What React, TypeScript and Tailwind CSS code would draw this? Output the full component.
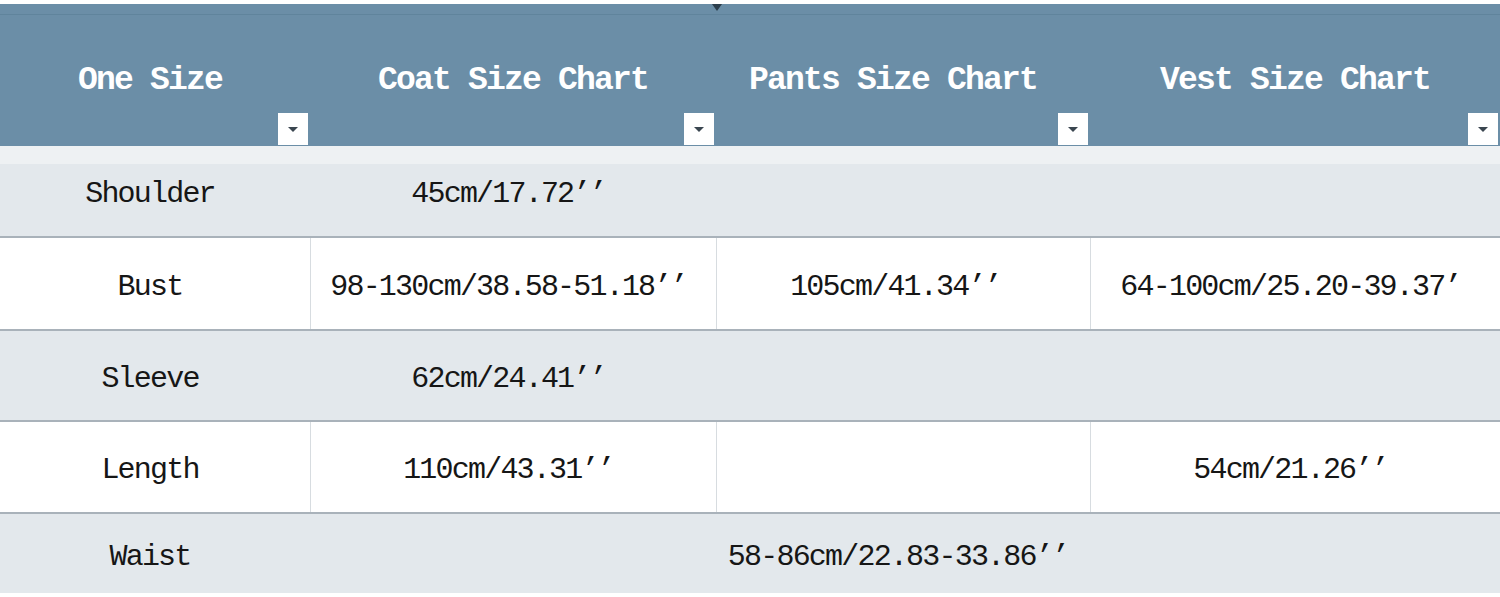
const columns = ['One Size', 'Coat Size Chart', 'Pants Size Chart', 'Vest Size Chart'];

type Row = {
  label: string;
  cells: [string, string, string];
  white: boolean;
  height: string;
};

const rows: Row[] = [
  { label: 'Shoulder', cells: ['45cm/17.72’’', '', ''], white: false, height: 'h-[92px]' },
  { label: 'Bust', cells: ['98-130cm/38.58-51.18’’', '105cm/41.34’’', '64-100cm/25.20-39.37’'], white: true, height: 'h-[93px]' },
  { label: 'Sleeve', cells: ['62cm/24.41’’', '', ''], white: false, height: 'h-[91px]' },
  { label: 'Length', cells: ['110cm/43.31’’', '', '54cm/21.26’’'], white: true, height: 'h-[92px]' },
];

const mono = "font-['Liberation_Mono','Courier_New',monospace]";

function FilterButton() {
  return (
    <div className="mt-auto mb-[1px] mr-[2px] self-end w-[30px] h-[32px] bg-white flex items-center justify-center">
      <svg width="12" height="7" viewBox="0 0 12 7">
        <path d="M1 1h10L6 6z" fill="#3a4650" />
      </svg>
    </div>
  );
}

export default function App() {
  return (
    <div className={`w-[1500px] h-[597px] bg-white pt-[4px] overflow-hidden ${mono}`}>
      <div className="relative h-[142px] bg-[#6b8ea7] flex flex-col">
        <div className="h-[11px] border-b border-[#60849c] shrink-0" />
        <div className="absolute left-[712px] top-0 w-0 h-0 border-l-[5px] border-r-[5px] border-t-[7px] border-l-transparent border-r-transparent border-t-[#2b3e4c]" />
        <div className="grid grid-cols-[310px_406px_374px_410px] flex-1">
          {columns.map((c, i) => (
            <div key={c} className="flex flex-col">
              <div
                className={`pt-[36px] h-[96px] leading-[60px] text-center text-white font-bold text-[33px] tracking-[-1.8px] whitespace-pre ${
                  i === 0 ? 'pr-[10px]' : i === 2 ? 'pr-[20px]' : ''
                }`}
              >
                {c}
              </div>
              <FilterButton />
            </div>
          ))}
        </div>
      </div>

      <div className="text-[#161616] text-[30px] tracking-[-1.8px]">
        {rows.map((r, idx) => (
          <div
            key={r.label}
            className={`grid grid-cols-[310px_406px_374px_410px] ${r.height} border-b-2 border-[#a9b2ba] ${
              r.white
                ? 'bg-white'
                : idx === 0
                ? 'bg-[linear-gradient(#eef1f3_0,#eef1f3_18px,#e3e8ec_18px)]'
                : 'bg-[#e3e8ec]'
            }`}
          >
            <div className="pt-[7px] flex items-center justify-center pr-[10px] whitespace-pre">{r.label}</div>
            {r.cells.map((v, j) => (
              <div
                key={j}
                className={`pt-[7px] flex items-center justify-center whitespace-pre border-l ${
                  r.white ? 'border-[#d7dce0]' : 'border-transparent'
                } ${j === 1 ? 'pr-[16px]' : 'pr-[10px]'}`}
              >
                {v}
              </div>
            ))}
          </div>
        ))}
        <div className="grid grid-cols-[310px_1190px] h-[79px] bg-[#e3e8ec]">
          <div className="pt-[7px] flex items-center justify-center pr-[10px]">Waist</div>
          <div className="pt-[7px] flex items-center justify-center pr-[14px] whitespace-pre">58-86cm/22.83-33.86’’</div>
        </div>
      </div>
    </div>
  );
}
